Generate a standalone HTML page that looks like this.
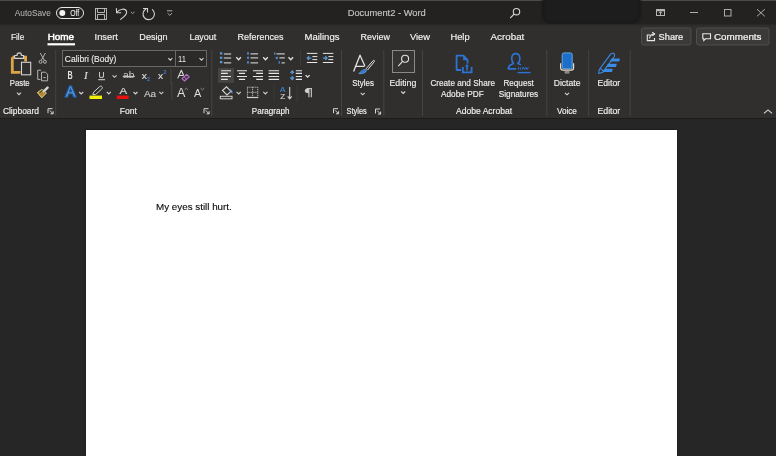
<!DOCTYPE html>
<html><head><meta charset="utf-8"><style>
*{margin:0;padding:0;box-sizing:border-box}
html,body{width:776px;height:456px;overflow:hidden;background:#262626;font-family:"Liberation Sans",sans-serif}
.t{position:absolute;white-space:nowrap;line-height:1;transform-origin:0 0}
.r{position:absolute}
svg{position:absolute;overflow:visible;will-change:transform}
</style></head><body>
<div class="r" style="left:0;top:0;width:776px;height:25px;background:#232221"></div>
<div class="r" style="left:0;top:0;width:776px;height:1px;background:#4a4a4a"></div>
<div class="r" style="left:542px;top:-8px;width:99px;height:32px;background:#1e1d1d;border:2px solid #171717;border-radius:10px;filter:blur(1.3px)"></div>
<div class="r" style="left:0;top:25px;width:776px;height:93px;background:#302f2d"></div>
<div class="r" style="left:0;top:24px;width:776px;height:1px;background:#292827"></div>
<div class="r" style="left:0;top:25px;width:776px;height:1px;background:#2d2c2a"></div>
<div class="r" style="left:0;top:118px;width:776px;height:1px;background:#1c1c1c"></div>
<div class="r" style="left:86px;top:130px;width:591px;height:340px;background:#ffffff;box-shadow:0 0 2px #141414"></div>
<svg width="776" height="456" style="left:0;top:0"><g stroke="#bdbdbd" stroke-width="0.95" fill="none"><rect x="95.5" y="8.5" width="11" height="11"/><path d="M97.5 8.5 V12.5 H104.5 V8.5"/><path d="M97.5 19.5 V14.5 H104.5 V19.5"/></g>
<g stroke="#d2d2d2" stroke-width="1.1" fill="none" stroke-linecap="round"><path d="M116.4 8.6 L116.6 12.7 L120.8 12.7"/><path d="M117 12.2 C119.5 8.8 125.5 7.8 126.6 11.6 C127.3 14 124.5 16.5 120.6 19.4"/></g>
<path d="M130.90 11.90 L132.70 13.50 L134.50 11.90" stroke="#b0b0b0" stroke-width="0.9" fill="none"/>
<g stroke="#d2d2d2" stroke-width="1.1" fill="none" stroke-linecap="round"><path d="M152.4 9.6 A5.7 5.7 0 1 1 145.6 9.2"/><path d="M143.4 8.5 L147.5 8.5 L147.5 12"/></g>
<g stroke="#bdbdbd" stroke-width="0.9" fill="none"><path d="M167 10.8 H172.4"/><path d="M167.6 13.2 L169.8 15.3 L172 13.2"/></g>
<rect x="56.5" y="7.5" width="27" height="11" rx="5.5" stroke="#e8e8e8" stroke-width="1" fill="none"/><circle cx="62.3" cy="13" r="3" fill="#f4f4f4"/>
<g stroke="#d2d2d2" stroke-width="1.1" fill="none"><circle cx="516.5" cy="11.7" r="3.2"/><path d="M514.2 14 L510.2 18"/></g>
<g stroke="#b4b4b4" fill="none"><rect x="656.5" y="9.5" width="8" height="6" stroke-width="1"/><path d="M656.5 10.5 H664.5" stroke-width="1.6"/><path d="M660.5 12 V15.5" stroke-width="1"/><path d="M658.8 13 L660.5 11.6 L662.2 13" stroke-width="0.9"/></g>
<g stroke="#adadad" stroke-width="1" fill="none"><path d="M690 12.5 H698"/><rect x="724.5" y="9.5" width="6.5" height="6.5"/><path d="M757 9.2 L764.8 16.3 M764.8 9.2 L757 16.3"/></g>
<rect x="47.5" y="43.2" width="27.5" height="2.2" fill="#ffffff"/>
<rect x="641.5" y="28" width="49.5" height="17" rx="2" fill="#3b3a39" stroke="#4e4d4c" stroke-width="1"/>
<rect x="696.5" y="28" width="72.5" height="17" rx="2" fill="#3b3a39" stroke="#4e4d4c" stroke-width="1"/>
<g stroke="#e8e8e8" stroke-width="1.1" fill="none"><path d="M650.5 35 H647.3 V40.6 H654.5 V38"/><path d="M649.5 38.5 C650 35.5 651.5 34 654.5 34"/><path d="M652.3 32.2 L654.6 34 L652.3 35.9"/></g>
<g stroke="#e8e8e8" stroke-width="1.1" fill="none"><path d="M702.8 33.8 H710.5 V38.8 H705.6 L703.8 40.5 V38.8 H702.8 Z"/></g>
<path d="M12.3 57.2 H16 M22 57.2 H25.6 V61.5 M12.3 57.2 V72.3 H20.5" stroke="#dca546" stroke-width="2.8" fill="none"/>
<path d="M14.6 58.4 V55.5 H17 C17 52 21.5 52 21.5 55.5 H23.6 V58.4 Z" stroke="#d2d2d2" stroke-width="1.1" fill="#302f2d"/>
<rect x="21.5" y="62.3" width="9.2" height="12.5" stroke="#d2d2d2" stroke-width="1.1" fill="#302f2d"/>
<path d="M17.00 92.60 L19.00 94.60 L21.00 92.60" stroke="#d2d2d2" stroke-width="1.1" fill="none"/>
<g stroke="#b8b8b8" stroke-width="0.95" fill="none"><path d="M40.2 53 L44.3 60.2 M45.4 53 L41.3 60.2"/><circle cx="40.6" cy="61.8" r="1.5"/><circle cx="44.9" cy="61.8" r="1.5"/></g>
<g stroke="#b8b8b8" stroke-width="0.95" fill="none"><path d="M41 70.2 H37.7 V79.4 H40.5"/><path d="M41.5 72.2 H45.5 L47.6 74.3 V80.8 H41.5 Z"/><path d="M43.3 77.6 H45.8"/></g>
<path d="M37.4 92.6 L41.9 89.4 L46.4 92.9 L41.8 97.8 Z" fill="#b08a30" stroke="#e6d48a" stroke-width="1" stroke-linejoin="round"/>
<path d="M39.6 92.4 L42.3 90.6 L44.4 92.3" stroke="#5a4418" stroke-width="1.2" fill="none"/>
<path d="M43.6 91.4 L47.6 87.6" stroke="#d6d6d6" stroke-width="2.4" stroke-linecap="round"/>
<rect x="62.5" y="50.5" width="113" height="16" fill="#2b2a29" stroke="#6a6968" stroke-width="1"/>
<rect x="175.5" y="50.5" width="31" height="16" fill="#2b2a29" stroke="#6a6968" stroke-width="1"/>
<path d="M168.30 58.20 L170.30 60.20 L172.30 58.20" stroke="#d2d2d2" stroke-width="1.1" fill="none"/>
<path d="M199.50 58.20 L201.50 60.20 L203.50 58.20" stroke="#d2d2d2" stroke-width="1.1" fill="none"/>
<path d="M112.60 75.30 L114.60 77.30 L116.60 75.30" stroke="#d2d2d2" stroke-width="1.1" fill="none"/>
<path d="M98.3 79.7 H105" stroke="#d8d8d8" stroke-width="1"/>
<path d="M122.8 76.4 H134.8" stroke="#d8d8d8" stroke-width="1"/>
<path d="M171 69 V84" stroke="#444" stroke-width="1"/>
<path d="M177.7 78.4 L181.3 70.3 L183.7 75.6 M178.9 75.5 H183.2" stroke="#dcdcdc" stroke-width="1.1" fill="none" stroke-linejoin="round"/>
<path d="M182 78.6 L186.6 74.3 L189.2 76.8 L184.5 81 Z" stroke="#b474c4" stroke-width="1.1" fill="#4a2c55" stroke-linejoin="round"/>
<path d="M183.9 76.8 L186.5 79.2" stroke="#b474c4" stroke-width="0.9"/>
<path d="M64.6 97.3 L69.4 85.6 H71.6 L76.6 97.3 H73.4 L72.2 94 H68.9 L67.8 97.3 Z M69.7 91.6 H71.4 L70.55 88.9 Z" fill="#4f8fd2" fill-rule="evenodd" stroke="#1b4f8c" stroke-width="1.1" stroke-linejoin="round"/>
<path d="M79.20 92.00 L81.20 94.00 L83.20 92.00" stroke="#d2d2d2" stroke-width="1.1" fill="none"/>
<path d="M92.8 94.6 L93.6 92.2 L99.6 86.6 C100.4 85.9 101.5 86 102 86.7 C102.6 87.4 102.4 88.3 101.7 89 L95.6 94.6 Z" stroke="#d2d2d2" stroke-width="1" fill="none" stroke-linejoin="round"/>
<rect x="89.5" y="95.6" width="12.5" height="3.4" fill="#f2f000"/>
<path d="M106.80 91.90 L108.80 93.90 L110.80 91.90" stroke="#d2d2d2" stroke-width="1.1" fill="none"/>
<rect x="116.8" y="95.6" width="11.9" height="3.4" fill="#e81010"/>
<path d="M133.50 92.00 L135.50 94.00 L137.50 92.00" stroke="#d2d2d2" stroke-width="1.1" fill="none"/>
<path d="M159.30 91.80 L161.30 93.80 L163.30 91.80" stroke="#d2d2d2" stroke-width="1.1" fill="none"/>
<path d="M171.8 82 V100" stroke="#444" stroke-width="1"/>
<g stroke="#d8d8d8" stroke-width="1" fill="none"><path d="M48.0 113.2 V108.7 H52.5"/><path d="M49.7 110.4 L53.1 113.8 M53.1 111.2 V113.8 H50.5"/></g>
<g stroke="#d8d8d8" stroke-width="1" fill="none"><path d="M204.0 113.2 V108.7 H208.5"/><path d="M205.7 110.4 L209.1 113.8 M209.1 111.2 V113.8 H206.5"/></g>
<g stroke="#d8d8d8" stroke-width="1" fill="none"><path d="M333.5 113.2 V108.7 H338"/><path d="M335.2 110.4 L338.6 113.8 M338.6 111.2 V113.8 H336"/></g>
<g stroke="#d8d8d8" stroke-width="1" fill="none"><path d="M375.5 113.5 V109.0 H380"/><path d="M377.2 110.7 L380.6 114.1 M380.6 111.5 V114.1 H378"/></g>
<path d="M55.7 50 V116" stroke="#444342" stroke-width="1"/>
<path d="M211.8 50 V116" stroke="#444342" stroke-width="1"/>
<path d="M341.5 50 V116" stroke="#444342" stroke-width="1"/>
<path d="M383.8 50 V116" stroke="#444342" stroke-width="1"/>
<path d="M422.5 50 V116" stroke="#444342" stroke-width="1"/>
<path d="M546.8 50 V116" stroke="#444342" stroke-width="1"/>
<path d="M588.6 50 V116" stroke="#444342" stroke-width="1"/>
<path d="M630.2 50 V116" stroke="#444342" stroke-width="1"/>
<path d="M184.6 89.8 L186.3 88.2 L188 89.8 M200.6 88.2 L202.4 89.8 L204.2 88.2" stroke="#7e9cb4" stroke-width="0.9" fill="none"/>
<rect x="219.9" y="52.3" width="2.4" height="2.2" fill="#5a9ad6"/>
<path d="M223.9 54.0 H231.2" stroke="#e6e6e6" stroke-width="1"/>
<rect x="219.9" y="56.7" width="2.4" height="2.2" fill="#5a9ad6"/>
<path d="M223.9 58.0 H231.2" stroke="#e6e6e6" stroke-width="1"/>
<rect x="219.9" y="61.0" width="2.4" height="2.2" fill="#5a9ad6"/>
<path d="M223.9 62.9 H231.2" stroke="#e6e6e6" stroke-width="1"/>
<path d="M236.30 57.30 L238.60 59.70 L240.90 57.30" stroke="#e6e6e6" stroke-width="1.3" fill="none"/>
<rect x="247" y="52.3" width="2" height="2.2" fill="#4a88c8"/>
<path d="M250.5 53.9 H258.1" stroke="#e6e6e6" stroke-width="1"/>
<rect x="247" y="56.7" width="2" height="2.2" fill="#4a88c8"/>
<path d="M250.5 57.9 H258.1" stroke="#e6e6e6" stroke-width="1"/>
<rect x="247" y="61.3" width="2" height="2.2" fill="#4a88c8"/>
<path d="M250.5 62.9 H258.1" stroke="#e6e6e6" stroke-width="1"/>
<path d="M263.20 57.30 L265.50 59.70 L267.80 57.30" stroke="#e6e6e6" stroke-width="1.3" fill="none"/>
<rect x="274" y="52.3" width="1.4" height="2.4" fill="#4a88c8"/><path d="M276.5 53.9 H284.8" stroke="#e6e6e6" stroke-width="1"/>
<rect x="275.7" y="56.8" width="2.2" height="2.3" fill="#4a88c8"/><path d="M279.4 57.9 H284.8" stroke="#e6e6e6" stroke-width="1"/>
<rect x="278.6" y="61.3" width="1.4" height="2.3" fill="#4a88c8"/><path d="M281.5 62.9 H284.8" stroke="#e6e6e6" stroke-width="1"/>
<path d="M288.50 57.30 L290.80 59.70 L293.10 57.30" stroke="#e6e6e6" stroke-width="1.3" fill="none"/>
<path d="M300.5 50 V66" stroke="#3c3b3a" stroke-width="1"/>
<path d="M306.9 53.4 H317.29999999999995 M312.4 56.6 H317.29999999999995 M312.4 59.6 H317.29999999999995 M306.9 62.5 H317.29999999999995" stroke="#e6e6e6" stroke-width="1"/>
<path d="M311.4 58.1 H307.2 M309.09999999999997 56.2 L307.2 58.1 L309.09999999999997 60" stroke="#5a9ad6" stroke-width="1.1" fill="none"/>
<path d="M322.9 53.4 H333.29999999999995 M328.4 56.6 H333.29999999999995 M328.4 59.6 H333.29999999999995 M322.9 62.5 H333.29999999999995" stroke="#e6e6e6" stroke-width="1"/>
<path d="M322.9 58.1 H327.09999999999997 M325.2 56.2 L327.09999999999997 58.1 L325.2 60" stroke="#5a9ad6" stroke-width="1.1" fill="none"/>
<rect x="218" y="68" width="16" height="14.8" fill="#454443"/>
<path d="M221 70.7 H231 M221 73.4 H227.8 M221 76.5 H231 M221 79.4 H227.8 " stroke="#e6e6e6" stroke-width="1.1"/>
<path d="M237 70.7 H247 M238.9 73.4 H245.1 M237 76.5 H247 M238.9 79.4 H245.1 " stroke="#e6e6e6" stroke-width="1.1"/>
<path d="M252.9 70.7 H263 M256.2 73.4 H263 M252.9 76.5 H263 M256.2 79.4 H263 " stroke="#e6e6e6" stroke-width="1.1"/>
<path d="M268.6 70.7 H279.1 M268.6 73.4 H279.1 M268.6 76.5 H279.1 M268.6 79.4 H279.1 " stroke="#e6e6e6" stroke-width="1.1"/>
<path d="M295.8 70.7 H302 M295.8 73.4 H302 M295.8 76.5 H302 M295.8 79.4 H302 " stroke="#e6e6e6" stroke-width="1.1"/>
<path d="M292.2 71.5 V74.3 M292.2 76 V79 M290.4 72.9 L292.2 70.9 L294 72.9 M290.4 77.5 L292.2 79.5 L294 77.5" stroke="#5a9ad6" stroke-width="1.2" fill="none"/>
<path d="M305.60 75.20 L307.60 77.20 L309.60 75.20" stroke="#e6e6e6" stroke-width="1.2" fill="none"/>
<path d="M222.5 90.5 L226.5 86.8 L231 91.3 L227 95 Z" stroke="#d2d2d2" stroke-width="1.1" fill="none"/>
<path d="M229.5 89.5 C231.5 90.5 232.3 92 231.8 93.2" stroke="#6aa0d8" stroke-width="1.2" fill="none"/>
<rect x="220.3" y="96.3" width="11.7" height="2.5" stroke="#d2d2d2" stroke-width="1" fill="none"/>
<path d="M236.60 91.90 L238.70 93.90 L240.80 91.90" stroke="#d2d2d2" stroke-width="1.1" fill="none"/>
<g stroke="#d2d2d2" stroke-width="1" fill="none" stroke-dasharray="1 1"><rect x="247.4" y="87.2" width="10.4" height="10.3"/><path d="M252.6 87.2 V97.5 M247.4 92.3 H257.8"/></g>
<path d="M247 97.5 H258.2" stroke="#d2d2d2" stroke-width="1.2"/>
<path d="M263.30 91.90 L265.40 93.90 L267.50 91.90" stroke="#d2d2d2" stroke-width="1.1" fill="none"/>
<path d="M274 84 V101" stroke="#3c3b3a" stroke-width="1"/>
<path d="M289.7 87 V98.6 M287.7 96.4 L289.7 98.8 L291.7 96.4" stroke="#d2d2d2" stroke-width="1.1" fill="none"/>
<path d="M297.1 84 V102" stroke="#3c3b3a" stroke-width="1"/>
<path d="M306.9 88.6 H312" stroke="#cfcfcf" stroke-width="1"/><path d="M308.9 88.6 V97.2 M311.3 88.6 V97.2" stroke="#cfcfcf" stroke-width="1.1"/><path d="M308.9 88.2 C305.6 88.2 304.8 89.6 304.8 90.8 C304.8 92.1 305.8 93.2 308.9 93.2 Z" fill="#cfcfcf"/>
<path d="M353.6 71.6 L360 55.2 L364.9 66 M354.8 66.3 H364.6" stroke="#e2e2e2" stroke-width="1.3" fill="none" stroke-linejoin="round"/>
<path d="M366 68.8 L373.2 60.6 C373.8 59.9 375 60.7 374.4 61.5 L367.6 69.9" stroke="#e2e2e2" stroke-width="1" fill="none"/>
<path d="M358.8 73.6 C361 71 363 69.2 366.5 69.4 C367.2 71.5 364.5 74 358.8 73.6 Z" fill="#2b78d0" stroke="#7ab0e8" stroke-width="0.6"/>
<path d="M360.70 92.80 L362.70 94.80 L364.70 92.80" stroke="#d2d2d2" stroke-width="1.1" fill="none"/>
<rect x="392.5" y="50.5" width="22" height="22" fill="#353433" stroke="#8a8988" stroke-width="1"/>
<g stroke="#e2e2e2" stroke-width="1.1" fill="none"><circle cx="405.1" cy="58.8" r="3.5"/><path d="M402.6 61.4 L398.3 66.2"/></g>
<path d="M401.20 91.50 L403.20 93.50 L405.20 91.50" stroke="#d2d2d2" stroke-width="1.1" fill="none"/>
<path d="M461 70 H456.6 V55.6 H463.4 L467.5 59.9 V63.4" stroke="#2b74d6" stroke-width="1.8" fill="none" stroke-linejoin="round"/>
<path d="M463.2 55.6 V60.2 H467.5 Z" fill="#2b74d6"/>
<path d="M462.8 67 V72.3 H471.6 V67" stroke="#2b74d6" stroke-width="1.8" fill="none"/>
<path d="M467 70.5 V65.5" stroke="#2b74d6" stroke-width="1.6"/><path d="M464.9 66.4 L467 63.9 L469.1 66.4 Z" fill="#2b74d6"/>
<path d="M513.8 63.6 C510.8 61 510.8 53.6 515.8 53.6 C520.8 53.6 520.8 61 517.8 63.6 C519 64 520.3 64.4 521 64.8 M513.8 63.6 C510.2 64.6 508.3 66.3 508.3 68.9 H516.3" stroke="#2b74d6" stroke-width="1.6" fill="none" stroke-linejoin="round"/>
<path d="M518.5 69.5 V67.3 M520.3 69.5 V67.3 M522 69.5 L523.2 67.2 L524.5 69.5 L525.8 67.2 L527 69.5 L528.4 67.2" stroke="#2b74d6" stroke-width="1" fill="none"/>
<path d="M517.6 72.6 H530.5" stroke="#2b74d6" stroke-width="1.4"/>
<rect x="562.2" y="52.9" width="10" height="15.9" rx="1.8" fill="#1c6ec8" stroke="#6ab0f0" stroke-width="0.9"/>
<path d="M560.6 63.2 V67.8 C560.6 69.4 561.6 70.2 563 70.2 H571.3 C572.7 70.2 573.6 69.4 573.6 67.8 V63.2" stroke="#e4dccc" stroke-width="1.2" fill="none"/>
<rect x="564.6" y="71" width="4.8" height="2.6" fill="#8a8a8a"/>
<path d="M565.00 92.80 L567.00 94.80 L569.00 92.80" stroke="#d2d2d2" stroke-width="1.1" fill="none"/>
<path d="M598.6 73.5 L599.3 69.5 L610.6 54.2 C611.5 53 613.3 52.8 614.2 53.8 C615 54.7 614.8 56 614 57 L602.7 72.3 Z M600.5 68.6 L603.7 71.2" stroke="#3a8be8" stroke-width="1.1" fill="none" stroke-linejoin="round"/>
<path d="M611.6 58.4 H620 L619.2 61.5 H609.6 Z M608 63.8 H616.8 L616 66.9 H606 Z M604.8 68.7 H612.8 L612 71.9 H602.6 Z" fill="#3a8be8"/>
<path d="M764 113.4 L768 109.9 L772 113.4" stroke="#d8d8d8" stroke-width="1.1" fill="none"/>
<text x="14.80" y="16.10" font-family="Liberation Sans" font-size="8.61" fill="#b4b4b4" stroke="#b4b4b4" stroke-width="0.05" textLength="36.06" lengthAdjust="spacingAndGlyphs">AutoSave</text>
<text x="70.20" y="16.10" font-family="Liberation Sans" font-size="8.47" fill="#f4f4f4" stroke="#f4f4f4" stroke-width="0.05" textLength="9.01" lengthAdjust="spacingAndGlyphs">Off</text>
<text x="347.70" y="16.10" font-family="Liberation Sans" font-size="8.89" fill="#c4c4c4" stroke="#c4c4c4" stroke-width="0.15" textLength="78.06" lengthAdjust="spacingAndGlyphs">Document2 - Word</text>
<text x="10.90" y="40.00" font-family="Liberation Sans" font-size="9.31" fill="#f2f2f2" stroke="#f2f2f2" stroke-width="0.15" textLength="13.39" lengthAdjust="spacingAndGlyphs">File</text>
<text x="47.70" y="40.00" font-family="Liberation Sans" font-size="9.31" fill="#ffffff" stroke="#ffffff" stroke-width="0.5" textLength="26.44" lengthAdjust="spacingAndGlyphs">Home</text>
<text x="94.60" y="40.00" font-family="Liberation Sans" font-size="9.31" fill="#f2f2f2" stroke="#f2f2f2" stroke-width="0.15" textLength="23.30" lengthAdjust="spacingAndGlyphs">Insert</text>
<text x="139.30" y="40.00" font-family="Liberation Sans" font-size="9.31" fill="#f2f2f2" stroke="#f2f2f2" stroke-width="0.15" textLength="28.37" lengthAdjust="spacingAndGlyphs">Design</text>
<text x="189.40" y="40.00" font-family="Liberation Sans" font-size="9.31" fill="#f2f2f2" stroke="#f2f2f2" stroke-width="0.15" textLength="26.94" lengthAdjust="spacingAndGlyphs">Layout</text>
<text x="237.60" y="40.00" font-family="Liberation Sans" font-size="9.31" fill="#f2f2f2" stroke="#f2f2f2" stroke-width="0.15" textLength="45.96" lengthAdjust="spacingAndGlyphs">References</text>
<text x="304.50" y="40.00" font-family="Liberation Sans" font-size="9.31" fill="#f2f2f2" stroke="#f2f2f2" stroke-width="0.15" textLength="35.00" lengthAdjust="spacingAndGlyphs">Mailings</text>
<text x="360.60" y="40.00" font-family="Liberation Sans" font-size="9.31" fill="#f2f2f2" stroke="#f2f2f2" stroke-width="0.15" textLength="29.41" lengthAdjust="spacingAndGlyphs">Review</text>
<text x="410.00" y="40.00" font-family="Liberation Sans" font-size="9.31" fill="#f2f2f2" stroke="#f2f2f2" stroke-width="0.15" textLength="20.00" lengthAdjust="spacingAndGlyphs">View</text>
<text x="450.40" y="40.00" font-family="Liberation Sans" font-size="9.31" fill="#f2f2f2" stroke="#f2f2f2" stroke-width="0.15" textLength="19.21" lengthAdjust="spacingAndGlyphs">Help</text>
<text x="490.60" y="40.00" font-family="Liberation Sans" font-size="9.31" fill="#f2f2f2" stroke="#f2f2f2" stroke-width="0.15" textLength="33.74" lengthAdjust="spacingAndGlyphs">Acrobat</text>
<text x="658.60" y="40.00" font-family="Liberation Sans" font-size="9.44" fill="#f4f4f4" stroke="#f4f4f4" stroke-width="0.2" textLength="24.65" lengthAdjust="spacingAndGlyphs">Share</text>
<text x="714.00" y="40.00" font-family="Liberation Sans" font-size="9.44" fill="#f4f4f4" stroke="#f4f4f4" stroke-width="0.2" textLength="47.53" lengthAdjust="spacingAndGlyphs">Comments</text>
<text x="9.70" y="85.80" font-family="Liberation Sans" font-size="9.03" fill="#f0f0f0" stroke="#f0f0f0" stroke-width="0.15" textLength="19.97" lengthAdjust="spacingAndGlyphs">Paste</text>
<text x="64.80" y="62.00" font-family="Liberation Sans" font-size="9.31" fill="#e8e8e8" stroke="#e8e8e8" stroke-width="0.15" textLength="51.49" lengthAdjust="spacingAndGlyphs">Calibri (Body)</text>
<text x="178.00" y="62.00" font-family="Liberation Sans" font-size="9.31" fill="#e8e8e8" stroke="#e8e8e8" stroke-width="0" textLength="7.93" lengthAdjust="spacingAndGlyphs">11</text>
<text x="352.20" y="85.80" font-family="Liberation Sans" font-size="9.03" fill="#f0f0f0" stroke="#f0f0f0" stroke-width="0.15" textLength="21.76" lengthAdjust="spacingAndGlyphs">Styles</text>
<text x="389.50" y="85.80" font-family="Liberation Sans" font-size="9.72" fill="#f0f0f0" stroke="#f0f0f0" stroke-width="0.15" textLength="26.78" lengthAdjust="spacingAndGlyphs">Editing</text>
<text x="430.40" y="86.20" font-family="Liberation Sans" font-size="9.31" fill="#f0f0f0" stroke="#f0f0f0" stroke-width="0.15" textLength="64.57" lengthAdjust="spacingAndGlyphs">Create and Share</text>
<text x="441.00" y="97.10" font-family="Liberation Sans" font-size="8.47" fill="#f0f0f0" stroke="#f0f0f0" stroke-width="0.15" textLength="42.74" lengthAdjust="spacingAndGlyphs">Adobe PDF</text>
<text x="503.40" y="86.20" font-family="Liberation Sans" font-size="9.31" fill="#f0f0f0" stroke="#f0f0f0" stroke-width="0.15" textLength="30.42" lengthAdjust="spacingAndGlyphs">Request</text>
<text x="498.80" y="97.10" font-family="Liberation Sans" font-size="8.47" fill="#f0f0f0" stroke="#f0f0f0" stroke-width="0.15" textLength="39.30" lengthAdjust="spacingAndGlyphs">Signatures</text>
<text x="553.70" y="85.80" font-family="Liberation Sans" font-size="9.03" fill="#f0f0f0" stroke="#f0f0f0" stroke-width="0.15" textLength="26.77" lengthAdjust="spacingAndGlyphs">Dictate</text>
<text x="597.50" y="85.80" font-family="Liberation Sans" font-size="9.03" fill="#f0f0f0" stroke="#f0f0f0" stroke-width="0.15" textLength="22.66" lengthAdjust="spacingAndGlyphs">Editor</text>
<text x="2.90" y="113.90" font-family="Liberation Sans" font-size="8.33" fill="#f2f2f2" stroke="#f2f2f2" stroke-width="0.15" textLength="36.15" lengthAdjust="spacingAndGlyphs">Clipboard</text>
<text x="119.70" y="113.90" font-family="Liberation Sans" font-size="8.33" fill="#f2f2f2" stroke="#f2f2f2" stroke-width="0.15" textLength="17.22" lengthAdjust="spacingAndGlyphs">Font</text>
<text x="251.80" y="113.90" font-family="Liberation Sans" font-size="8.33" fill="#f2f2f2" stroke="#f2f2f2" stroke-width="0.15" textLength="37.74" lengthAdjust="spacingAndGlyphs">Paragraph</text>
<text x="346.50" y="113.90" font-family="Liberation Sans" font-size="8.33" fill="#f2f2f2" stroke="#f2f2f2" stroke-width="0.15" textLength="20.25" lengthAdjust="spacingAndGlyphs">Styles</text>
<text x="456.00" y="113.90" font-family="Liberation Sans" font-size="8.33" fill="#f2f2f2" stroke="#f2f2f2" stroke-width="0.15" textLength="56.12" lengthAdjust="spacingAndGlyphs">Adobe Acrobat</text>
<text x="556.90" y="113.90" font-family="Liberation Sans" font-size="8.33" fill="#f2f2f2" stroke="#f2f2f2" stroke-width="0.15" textLength="20.01" lengthAdjust="spacingAndGlyphs">Voice</text>
<text x="597.50" y="113.90" font-family="Liberation Sans" font-size="8.33" fill="#f2f2f2" stroke="#f2f2f2" stroke-width="0.15" textLength="22.72" lengthAdjust="spacingAndGlyphs">Editor</text>
<text x="67.50" y="78.50" font-family="Liberation Sans" font-size="10.00" fill="#e0e0e0" font-weight="bold" stroke="#e0e0e0" stroke-width="0" textLength="5.18" lengthAdjust="spacingAndGlyphs">B</text>
<text x="83.94" y="78.50" font-family="Liberation Serif" font-size="9.86" fill="#dcdcdc" font-style="italic" stroke="#dcdcdc" stroke-width="0.15" textLength="3.73" lengthAdjust="spacingAndGlyphs">I</text>
<text x="98.60" y="78.40" font-family="Liberation Sans" font-size="9.58" fill="#dcdcdc" stroke="#dcdcdc" stroke-width="0.15" textLength="6.04" lengthAdjust="spacingAndGlyphs">U</text>
<text x="123.00" y="78.20" font-family="Liberation Sans" font-size="8.60" fill="#c8c8c8" stroke="#c8c8c8" stroke-width="0" textLength="11.53" lengthAdjust="spacingAndGlyphs">ab</text>
<text x="141.80" y="78.50" font-family="Liberation Sans" font-size="9.60" fill="#dcdcdc" stroke="#dcdcdc" stroke-width="0.15" textLength="5.15" lengthAdjust="spacingAndGlyphs">x</text>
<text x="146.90" y="81.30" font-family="Liberation Sans" font-size="5.00" fill="#3a86d8" stroke="#3a86d8" stroke-width="0.15" textLength="2.83" lengthAdjust="spacingAndGlyphs">2</text>
<text x="158.00" y="78.50" font-family="Liberation Sans" font-size="9.60" fill="#dcdcdc" stroke="#dcdcdc" stroke-width="0.15" textLength="5.15" lengthAdjust="spacingAndGlyphs">x</text>
<text x="163.60" y="73.90" font-family="Liberation Sans" font-size="5.00" fill="#3a86d8" stroke="#3a86d8" stroke-width="0.15" textLength="2.83" lengthAdjust="spacingAndGlyphs">2</text>
<text x="119.40" y="94.40" font-family="Liberation Sans" font-size="9.31" fill="#dcdcdc" stroke="#dcdcdc" stroke-width="0.15" textLength="7.65" lengthAdjust="spacingAndGlyphs">A</text>
<text x="143.90" y="96.80" font-family="Liberation Sans" font-size="9.58" fill="#c8c8c8" stroke="#c8c8c8" stroke-width="0.15" textLength="12.17" lengthAdjust="spacingAndGlyphs">Aa</text>
<text x="177.00" y="96.80" font-family="Liberation Sans" font-size="13.61" fill="#dedede" stroke="#dedede" stroke-width="0" textLength="8.36" lengthAdjust="spacingAndGlyphs">A</text>
<text x="194.00" y="96.80" font-family="Liberation Sans" font-size="10.69" fill="#dedede" stroke="#dedede" stroke-width="0" textLength="7.28" lengthAdjust="spacingAndGlyphs">A</text>
<text x="280.00" y="91.70" font-family="Liberation Sans" font-size="6.50" fill="#3a86d8" stroke="#3a86d8" stroke-width="0.15" textLength="5.35" lengthAdjust="spacingAndGlyphs">A</text>
<text x="280.30" y="99.00" font-family="Liberation Sans" font-size="7.60" fill="#cccccc" stroke="#cccccc" stroke-width="0.15" textLength="4.92" lengthAdjust="spacingAndGlyphs">Z</text>
<text x="156.00" y="209.80" font-family="Liberation Sans" font-size="9.31" fill="#0a0a0a" stroke="#0a0a0a" stroke-width="0.12" textLength="75.80" lengthAdjust="spacingAndGlyphs">My eyes still hurt.</text></svg>
</body></html>
